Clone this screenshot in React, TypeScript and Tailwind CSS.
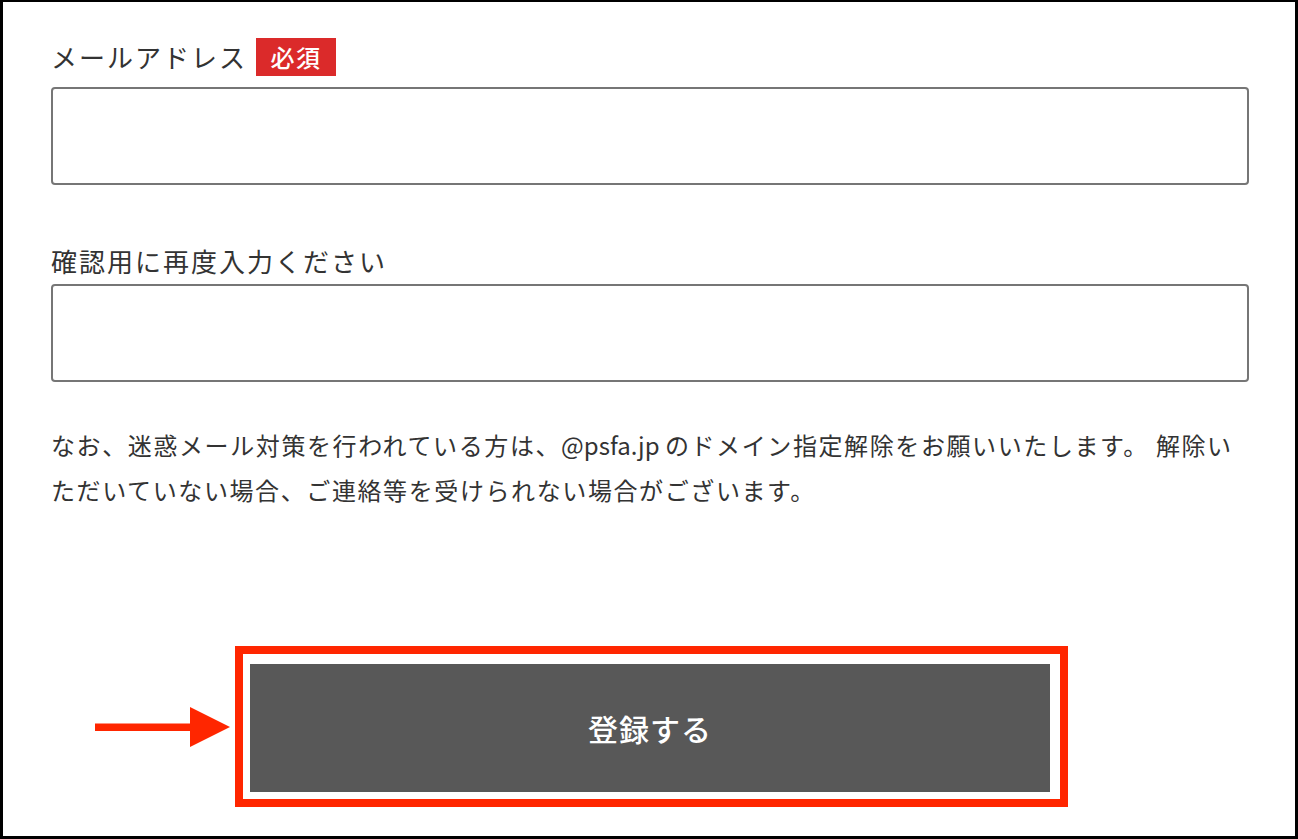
import React from "react";

const font = { fontFamily: '"Noto Sans CJK JP", "Noto Sans", sans-serif' };

function Arrow() {
  return (
    <svg width="136" height="40" viewBox="0 0 136 40" className="shrink-0">
      <rect x="0" y="16.5" width="98" height="7.5" fill="#ff2600" />
      <polygon points="95,0 135,20 95,40" fill="#ff2600" />
    </svg>
  );
}

export default function App() {
  return (
    <div
      className="w-[1298px] h-[839px] bg-white border-[3px] border-t-2 border-black box-border overflow-hidden text-[#333333]"
      style={font}
    >
      <div className="pl-[48px] pr-[46px]">
        <div className="flex items-center h-[38px] mt-[36px]">
          <span className="text-[26px] tracking-[2px] leading-[38px]">メールアドレス</span>
          <span className="ml-[9px] w-[80px] h-[38px] bg-[#db2a2a] text-white text-[24px] tracking-[1.5px] flex items-center justify-center font-medium">
            必須
          </span>
        </div>
        <div className="mt-[11px] h-[98px] border-2 border-[#767676] rounded-[4px]" />
        <div className="mt-[57px] text-[26px] tracking-[2px] leading-[38px]">確認用に再度入力ください</div>
        <div className="mt-[4px] h-[98px] border-2 border-[#767676] rounded-[4px]" />
        <p className="mt-[40px] text-[24px] tracking-[1.6px] leading-[45px] whitespace-nowrap">
          なお、迷惑メール対策を行われている方は、<span className="tracking-normal">@psfa.jp </span>のドメイン指定解除をお願いいたします。 解除い
          <br />
          ただいていない場合、ご連絡等を受けられない場合がございます。
        </p>
      </div>
      <div className="flex items-center mt-[134px] pl-[92px]">
        <Arrow />
        <div className="ml-[4px] w-[833px] h-[161px] border-[8px] border-[#ff2600] pl-[7px] pr-[10px] pt-[10px] pb-[7px] box-border">
          <div className="w-full h-full bg-[#585858] flex items-center justify-center text-white text-[30px] font-medium tracking-[1px]">
            登録する
          </div>
        </div>
      </div>
    </div>
  );
}
